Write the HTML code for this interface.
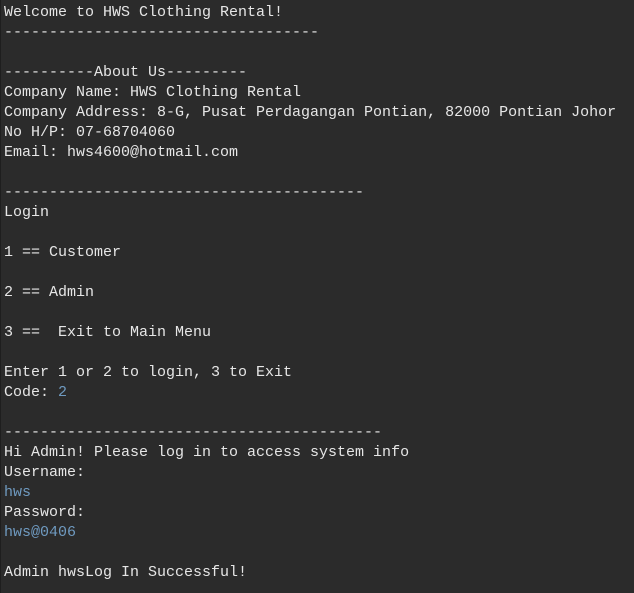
<!DOCTYPE html>
<html><head><meta charset="utf-8"><style>
html,body{margin:0;padding:0;background:#2b2b2b;width:634px;height:593px;overflow:hidden}
pre{margin:0;padding:3px 0 0 3px;font-family:"Liberation Mono",monospace;font-size:15px;line-height:20px;color:#e6e6e6;border-left:1px solid #1e1e1e;height:593px;box-sizing:border-box}
.i{color:#6f9ac0}
</style></head><body><pre>Welcome to HWS Clothing Rental!
-----------------------------------

----------About Us---------
Company Name: HWS Clothing Rental
Company Address: 8-G, Pusat Perdagangan Pontian, 82000 Pontian Johor
No H/P: 07-68704060
Email: hws4600@hotmail.com

----------------------------------------
Login

1 == Customer

2 == Admin

3 ==  Exit to Main Menu

Enter 1 or 2 to login, 3 to Exit
Code: <span class="i">2</span>

------------------------------------------
Hi Admin! Please log in to access system info
Username:
<span class="i">hws</span>
Password:
<span class="i">hws@0406</span>

Admin hwsLog In Successful!</pre></body></html>
